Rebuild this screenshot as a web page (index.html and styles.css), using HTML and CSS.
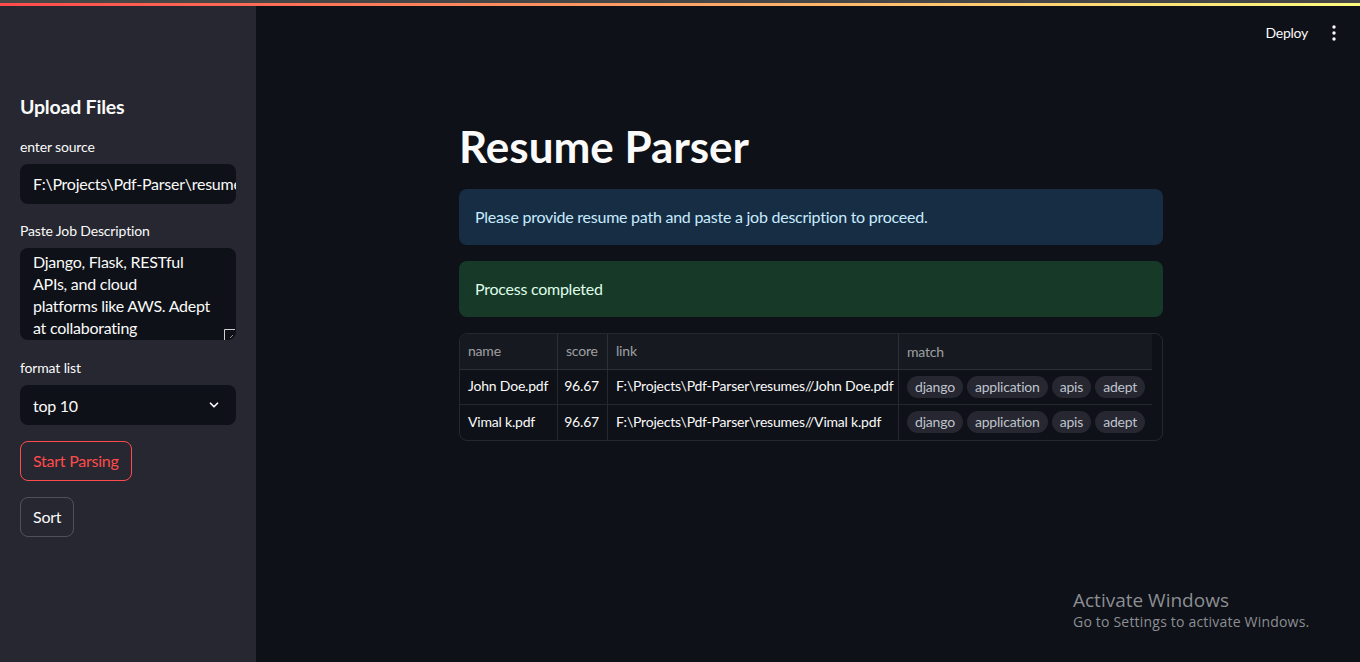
FILE: index.html
```html
<!DOCTYPE html>
<html lang="en">
<head>
<meta charset="utf-8">
<title>Resume Parser</title>
<link rel="stylesheet" href="styles.css">
</head>
<body>
<div class="chrome-strip"></div>
<div class="decoration"></div>
<div class="app">
  <aside class="sidebar">
    <h3 class="side-title">Upload Files</h3>
    <label class="field-label">enter source</label>
    <div class="input">F:\Projects\Pdf-Parser\resumes</div>
    <label class="field-label">Paste Job Description</label>
    <div class="textarea">
      <div class="textarea-text">Django, Flask, RESTful
APIs, and cloud
platforms like AWS. Adept
at collaborating</div>
      <svg class="resize" width="11" height="11" viewBox="0 0 11 11"><path d="M0.5 11V0.5H11" fill="none" stroke="#d0d0d0" stroke-width="1"/><path d="M6 9L9 6" stroke="#8a8a8a" stroke-width="1"/></svg>
    </div>
    <label class="field-label">format list</label>
    <div class="select">
      <span>top 10</span>
      <svg width="14" height="14" viewBox="0 0 24 24"><path d="M6 9l6 6 6-6" fill="none" stroke="#fafafa" stroke-width="3" stroke-linecap="round" stroke-linejoin="round"/></svg>
    </div>
    <button class="btn btn-primary">Start Parsing</button>
    <button class="btn btn-secondary">Sort</button>
  </aside>
  <main class="main">
    <header class="topbar">
      <span class="deploy">Deploy</span>
      <svg class="menu" width="6" height="16" viewBox="0 0 6 16"><circle cx="3" cy="2" r="1.7" fill="#fafafa"/><circle cx="3" cy="8" r="1.7" fill="#fafafa"/><circle cx="3" cy="14" r="1.7" fill="#fafafa"/></svg>
    </header>
    <div class="block">
      <h1 class="title">Resume Parser</h1>
      <div class="alert alert-info">Please provide resume path and paste a job description to proceed.</div>
      <div class="alert alert-success">Process completed</div>
      <div class="table-wrap">
        <div class="grid">
          <div class="row head">
            <div class="cell c-name">name</div>
            <div class="cell c-score">score</div>
            <div class="cell c-link">link</div>
            <div class="cell c-match">match</div>
          </div>
          <div class="row">
            <div class="cell c-name">John Doe.pdf</div>
            <div class="cell c-score num">96.67</div>
            <div class="cell c-link">F:\Projects\Pdf-Parser\resumes//John Doe.pdf</div>
            <div class="cell c-match"><span class="chip">django</span><span class="chip">application</span><span class="chip">apis</span><span class="chip">adept</span></div>
          </div>
          <div class="row last">
            <div class="cell c-name">Vimal k.pdf</div>
            <div class="cell c-score num">96.67</div>
            <div class="cell c-link">F:\Projects\Pdf-Parser\resumes//Vimal k.pdf</div>
            <div class="cell c-match"><span class="chip">django</span><span class="chip">application</span><span class="chip">apis</span><span class="chip">adept</span></div>
          </div>
        </div>
      </div>
    </div>
  </main>
</div>
<div class="watermark">
  <div class="wm-title">Activate Windows</div>
  <div class="wm-sub">Go to Settings to activate Windows.</div>
</div>
</body>
</html>
```

FILE: styles.css
```css
* { box-sizing: border-box; }
html, body {
  margin: 0;
  padding: 0;
  height: 662px;
  overflow: hidden;
  background: #0e1117;
  color: #fafafa;
  font-family: "Lato", "Open Sans", sans-serif;
  letter-spacing: -0.25px;
}
.chrome-strip { height: 3px; background: #464646; }
.decoration {
  height: 3px;
  background: linear-gradient(90deg, #ff4b4b, #fffd80);
}
.app {
  display: flex;
  height: 656px;
}
.sidebar {
  width: 256px;
  flex: 0 0 256px;
  background: #262730;
  padding: 88px 20px 0 20px;
  display: flex;
  flex-direction: column;
  align-items: flex-start;
}
.side-title {
  margin: 0 0 18px 0;
  font-size: 19.5px;
  font-weight: 700;
  line-height: 26px;
  letter-spacing: -0.2px;
}
.field-label {
  font-size: 14px;
  line-height: 18px;
  margin-bottom: 8px;
  color: #fafafa;
  letter-spacing: -0.15px;
}
.input {
  width: 216px;
  height: 40px;
  background: #0e1117;
  border-radius: 8px;
  padding: 0 13px;
  font-size: 16px;
  line-height: 40px;
  white-space: nowrap;
  overflow: hidden;
  margin-bottom: 18px;
}
.textarea {
  position: relative;
  width: 216px;
  height: 92px;
  background: #0e1117;
  border-radius: 8px;
  padding: 3px 13px 0 13px;
  overflow: hidden;
  margin-bottom: 19px;
}
.textarea-text {
  white-space: pre-line;
  font-size: 16px;
  line-height: 22px;
}
.resize {
  position: absolute;
  right: 1px;
  bottom: 0;
}
.select {
  width: 216px;
  height: 40px;
  background: #0e1117;
  border-radius: 8px;
  padding: 0 15px 0 13px;
  display: flex;
  align-items: center;
  justify-content: space-between;
  font-size: 16px;
  margin-bottom: 16px;
}
.btn {
  height: 40px;
  border-radius: 8px;
  background: transparent;
  font-family: inherit;
  font-size: 16px;
  letter-spacing: -0.25px;
  padding: 0 12px 2px 12px;
  margin-bottom: 16px;
  cursor: pointer;
}
.btn-primary {
  border: 1px solid #ff4b4b;
  color: #ff4b4b;
}
.btn-secondary {
  border: 1px solid rgba(250, 250, 250, 0.2);
  color: #fafafa;
}
.main {
  flex: 1;
  display: flex;
  flex-direction: column;
}
.topbar {
  height: 54px;
  display: flex;
  align-items: center;
  justify-content: flex-end;
  padding-right: 23px;
  gap: 23px;
}
.deploy { font-size: 14px; padding-bottom: 2px; }
.block {
  width: 704px;
  margin-left: 203px;
  padding-top: 60px;
}
.title {
  margin: 0 0 16px 0;
  font-size: 44px;
  line-height: 53px;
  font-weight: 700;
  letter-spacing: 0;
}
.alert {
  height: 56px;
  border-radius: 8px;
  padding: 0 16px 2px 16px;
  display: flex;
  align-items: center;
  font-size: 16px;
  margin-bottom: 16px;
}
.alert-info { background: #172d43; color: #c7ebff; }
.alert-success { background: #173928; color: #dffde9; }
.table-wrap {
  width: 704px;
  border: 1px solid rgba(250, 250, 250, 0.1);
  border-radius: 8px;
  overflow: hidden;
}
.grid { width: 692px; }
.row {
  display: flex;
  height: 35px;
  border-bottom: 1px solid rgba(250, 250, 250, 0.1);
  font-size: 14px;
  letter-spacing: -0.2px;
}
.row.last { border-bottom: none; }
.row.head {
  height: 36px;
  background: #161920;
  color: rgba(250, 250, 250, 0.6);
}
.cell {
  display: flex;
  align-items: center;
  padding: 0 8px 3px 8px;
  border-right: 1px solid rgba(250, 250, 250, 0.1);
  white-space: nowrap;
  overflow: hidden;
}
.c-name { width: 98px; }
.c-score { width: 50px; }
.row:not(.head) .c-score { justify-content: flex-end; }
.c-link { width: 291px; }
.c-match { width: 253px; border-right: none; gap: 4px; padding-bottom: 1px; }
.chip {
  height: 22px;
  border-radius: 11px;
  background: #262730;
  color: #bfc3cc;
  padding: 0 8px 1px 8px;
  display: inline-flex;
  align-items: center;
  font-size: 14px;
}
.watermark {
  position: absolute;
  left: 1073px;
  top: 588px;
  color: #8c8e93;
  font-family: "Open Sans", "Noto Sans", sans-serif;
  letter-spacing: 0;
}
.wm-title { font-size: 19px; line-height: 24px; }
.wm-sub { font-size: 14px; line-height: 20px; letter-spacing: 0.2px; }
```
